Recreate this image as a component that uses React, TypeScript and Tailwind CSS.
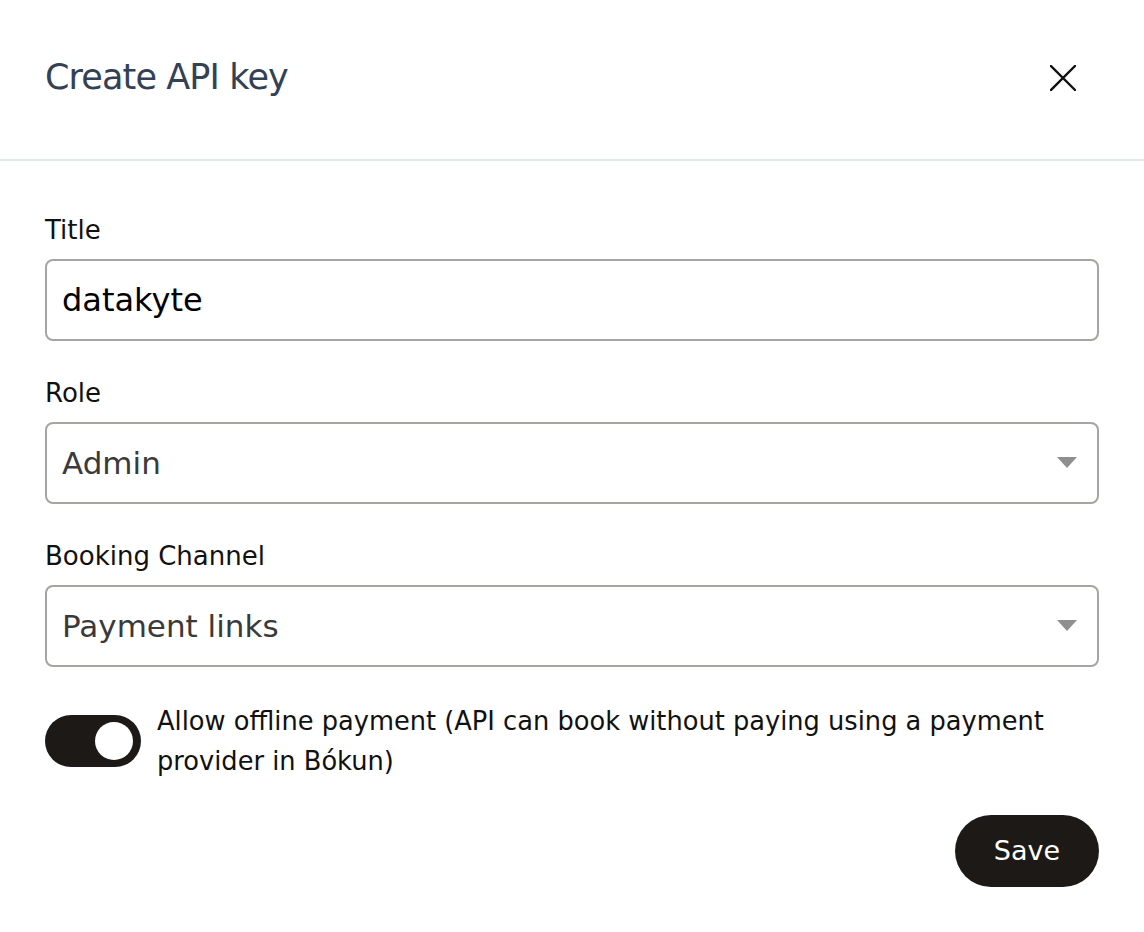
import React, { useState } from "react";

const font = { fontFamily: '"DejaVu Sans", "Open Sans", sans-serif' };

const Chevron = () => (
  <svg width="20" height="12" viewBox="0 0 20 12" className="shrink-0">
    <path d="M0 0 H20 L10 11 Z" fill="#8f8f8f" />
  </svg>
);

const CloseIcon = () => (
  <svg width="26" height="26" viewBox="0 0 26 26" fill="none">
    <path d="M1 1 L25 25 M25 1 L1 25" stroke="#111" strokeWidth="2.4" strokeLinecap="square" />
  </svg>
);

interface SelectProps {
  value: string;
}

const SelectBox = ({ value }: SelectProps) => (
  <div className="flex h-[82px] items-center justify-between rounded-lg border-2 border-[#a8a4a1] pl-[15px] pr-[20px]">
    <span className="text-[31px] text-[#3a3a3a]">{value}</span>
    <Chevron />
  </div>
);

const App = () => {
  const [title, setTitle] = useState("datakyte");
  const [offline, setOffline] = useState(true);

  return (
    <div className="min-h-[932px] w-full bg-white" style={font}>
      <div className="flex h-[161px] items-center justify-between border-b-2 border-[#e2e8f0] pl-[45px] pr-[68px]">
        <h1 className="-mt-[4px] text-[35px] tracking-tight text-[#334155]">Create API key</h1>
        <button className="-mt-[4px] flex items-center justify-center">
          <CloseIcon />
        </button>
      </div>

      <div className="flex flex-col px-[45px] pt-[51px]">
        <label className="mb-[11px] text-[26px] leading-[36px] text-[#111]">Title</label>
        <input
          value={title}
          onChange={(e) => setTitle(e.target.value)}
          className="h-[82px] rounded-lg border-2 border-[#a8a4a1] px-[15px] text-[32px] text-black outline-none"
        />

        <label className="mt-[34px] mb-[11px] text-[26px] leading-[36px] text-[#111]">Role</label>
        <SelectBox value="Admin" />

        <label className="mt-[34px] mb-[11px] text-[26px] leading-[36px] text-[#111]">Booking Channel</label>
        <SelectBox value="Payment links" />

        <div className="mt-[34px] flex items-center gap-[16px]">
          <button
            onClick={() => setOffline(!offline)}
            className="flex h-[52px] w-[96px] shrink-0 items-center rounded-full bg-[#1c1917] px-[8px]"
          >
            <span className={`h-[38px] w-[38px] rounded-full bg-white ${offline ? "ml-auto" : ""}`} />
          </button>
          <p className="text-[25.7px] leading-[40px] text-[#111]">
            Allow offline payment (API can book without paying using a payment provider in Bókun)
          </p>
        </div>

        <div className="mt-[34px] flex justify-end">
          <button className="h-[72px] w-[144px] rounded-full bg-[#1c1917] text-[27px] text-white">
            Save
          </button>
        </div>
      </div>
    </div>
  );
};

export default App;
